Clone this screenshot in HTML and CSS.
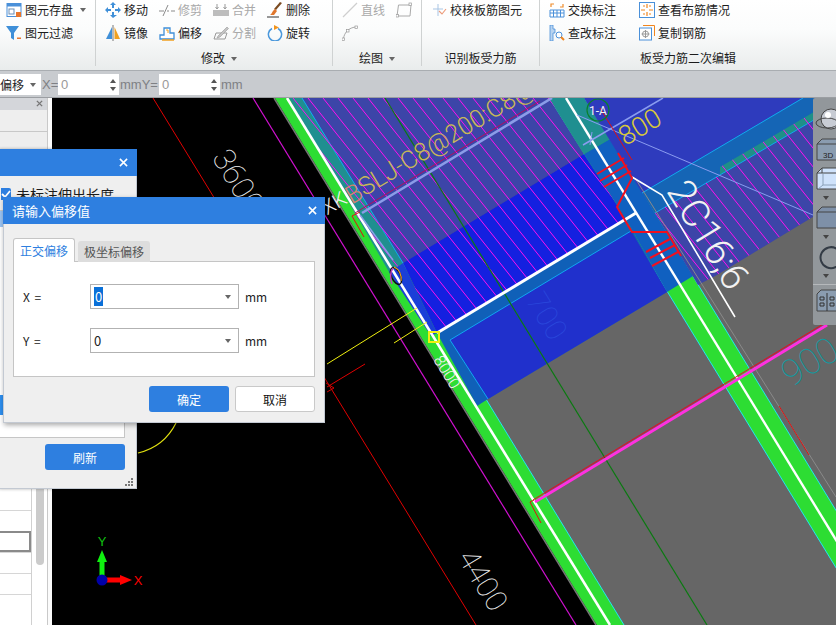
FILE: index.html
```html
<!DOCTYPE html>
<html lang="zh">
<head>
<meta charset="utf-8">
<title>板受力筋</title>
<link rel="stylesheet" href="styles.css">
</head>
<body>
<div class="app">
  <header class="ribbon">
    <section class="group g1">
      <div class="tools cols1">
        <div class="tool">
          <svg class="ic" viewBox="0 0 16 16"><rect x="1" y="1.5" width="14" height="13" fill="#fff" stroke="#4a90d9"/><rect x="1" y="1.5" width="14" height="3" fill="#4a90d9"/><rect x="3" y="7" width="5" height="5" fill="none" stroke="#6a8fb8"/><rect x="10" y="10" width="5" height="5" fill="#e8762c"/></svg>
          <span>图元存盘</span><i class="caret"></i>
        </div>
        <div class="tool">
          <svg class="ic" viewBox="0 0 16 16"><path d="M0 1h13L8 8v7L5 13V8z" fill="#3f8fd8"/><rect x="11" y="12.5" width="4" height="1.5" fill="#e8762c"/></svg>
          <span>图元过滤</span>
        </div>
      </div>
    </section>
    <section class="group g2">
      <div class="tools cols4">
        <div class="tool">
          <svg class="ic" viewBox="0 0 16 16"><path d="M8 0l3 3H9v3H7V3H5zM8 16l-3-3h2v-3h2v3h3zM0 8l3-3v2h3v2H3v2zM16 8l-3 3V9h-3V7h3V5z" fill="#3f8fd8"/></svg>
          <span>移动</span>
        </div>
        <div class="tool off">
          <svg class="ic" viewBox="0 0 16 16"><path d="M0 9h5M8 9h2M12 9h4M4 14L9 3" stroke="#8a8a8a" fill="none"/></svg>
          <span>修剪</span>
        </div>
        <div class="tool off">
          <svg class="ic" viewBox="0 0 16 16"><rect x="0" y="8" width="16" height="6" fill="#bdbdbd"/><path d="M4 2v5M2.500 5L4 7l1.500-2M12 2v5M10.500 5L12 7l1.500-2" stroke="#9a9a9a" fill="none"/></svg>
          <span>合并</span>
        </div>
        <div class="tool">
          <svg class="ic" viewBox="0 0 16 16"><path d="M15 1l-6 7-2-1 6-7z" fill="#7a4a20"/><path d="M8 7l2 2-3 4H3c2-1 2-4 5-6z" fill="#e0762c"/><rect x="0" y="14.500" width="12" height="1" fill="#333"/></svg>
          <span>删除</span>
        </div>
        <div class="tool">
          <svg class="ic" viewBox="0 0 16 16"><path d="M7 2v12H1z" fill="#3f8fd8"/><path d="M9.500 2v12H15z" fill="#f0a020"/><path d="M8 0v16" stroke="#777"/></svg>
          <span>镜像</span>
        </div>
        <div class="tool">
          <svg class="ic" viewBox="0 0 16 16"><path d="M1 14v-4h4V3h6v5h4v6z" fill="#fff" stroke="#3f8fd8" stroke-width="1.300"/><path d="M3 15h12" stroke="#f0a020" stroke-width="1.500"/><path d="M7 5h2v3" stroke="#f0a020" fill="none"/></svg>
          <span>偏移</span>
        </div>
        <div class="tool off">
          <svg class="ic" viewBox="0 0 16 16"><path d="M3 8h11l-2 6H1z" fill="none" stroke="#999"/><path d="M5 11L14 2l1.500 1.500L7 12l-3 1z" fill="#c4c4c4" stroke="#999" stroke-width=".6"/></svg>
          <span>分割</span>
        </div>
        <div class="tool">
          <svg class="ic" viewBox="0 0 16 16"><path d="M5 3.500a6.600 6.600 0 1 0 6 0" fill="none" stroke="#4a98dc" stroke-width="1.500"/><path d="M7 0l5 2.500-5 2.500z" fill="#f0941e"/></svg>
          <span>旋转</span>
        </div>
      </div>
      <div class="group-label">修改<i class="caret"></i></div>
    </section>
    <section class="group g3">
      <div class="tools cols2">
        <div class="tool off">
          <svg class="ic" viewBox="0 0 16 16"><path d="M1 15L15 1" stroke="#cfcfcf" stroke-width="1.300"/></svg>
          <span>直线</span>
        </div>
        <div class="tool off">
          <svg class="ic" viewBox="0 0 16 16"><path d="M1 14L2.500 3H15l-1 11z" fill="none" stroke="#aaa"/><rect x="0" y="12.500" width="2.500" height="2.500" fill="#fff" stroke="#999" stroke-width=".7"/><rect x="13" y="1" width="2.500" height="2.500" fill="#fff" stroke="#999" stroke-width=".7"/></svg>
        </div>
        <div class="tool off">
          <svg class="ic" viewBox="0 0 16 16"><path d="M1.500 14C2 7 8 2 14.500 2" fill="none" stroke="#aaa"/><rect x="0" y="13" width="2.500" height="2.500" fill="#fff" stroke="#999" stroke-width=".7"/><rect x="13" y="1" width="2.500" height="2.500" fill="#fff" stroke="#999" stroke-width=".7"/><rect x="4.500" y="4.500" width="2.500" height="2.500" fill="#fff" stroke="#999" stroke-width=".7"/></svg>
        </div>
      </div>
      <div class="group-label">绘图<i class="caret"></i></div>
    </section>
    <section class="group g4">
      <div class="tools cols1">
        <div class="tool tight">
          <svg class="ic" viewBox="0 0 16 16"><path d="M5 2v12M0 7h10" stroke="#a9c5e4" fill="none"/><path d="M6 9l3 3 4-5" stroke="#ec9a78" fill="none" stroke-width="1.100"/></svg>
          <span>校核板筋图元</span>
        </div>
      </div>
      <div class="group-label">识别板受力筋</div>
    </section>
    <section class="group g5">
      <div class="tools cols2w">
        <div class="tool">
          <svg class="ic" viewBox="0 0 16 16"><path d="M1 8h14v7H1zM1 11h14M4.500 8v7M8 8v7M11.500 8v7" fill="#fff" stroke="#4a90d9"/><path d="M2 5V2h3M11 5h3V2" stroke="#ee8c2c" fill="none" stroke-width="1.200"/></svg>
          <span>交换标注</span>
        </div>
        <div class="tool">
          <svg class="ic" viewBox="0 0 16 16"><rect x=".5" y=".5" width="15" height="15" fill="#fff" stroke="#4a90d9"/><path d="M8 2v4M8 10v4M2 8h4M10 8h4M4 4h2M10 4h2M4 12h2M10 12h2" stroke="#f0851e" stroke-width="1.200"/></svg>
          <span>查看布筋情况</span>
        </div>
        <div class="tool">
          <svg class="ic" viewBox="0 0 16 16"><path d="M1 0h3v4h2v4H4v8H1z" fill="#b9d4f0" stroke="#4a90d9" stroke-width=".8"/><circle cx="10" cy="10" r="3" fill="#fff" stroke="#4a90d9"/><path d="M12 12l3 3" stroke="#f0851e" stroke-width="2"/></svg>
          <span>查改标注</span>
        </div>
        <div class="tool">
          <svg class="ic" viewBox="0 0 16 16"><path d="M4 .5h11.500V11" fill="none" stroke="#f0851e"/><rect x=".5" y="3" width="12" height="12" fill="#fff" stroke="#4a90d9"/><circle cx="6.500" cy="9" r="3" fill="none" stroke="#999"/><path d="M6.500 5v8M2.500 9h8" stroke="#999"/></svg>
          <span>复制钢筋</span>
        </div>
      </div>
      <div class="group-label">板受力筋二次编辑</div>
    </section>
  </header>

  <div class="optbar">
    <div class="mode">偏移<i class="caret"></i></div>
    <span class="opt-label">X=</span>
    <div class="spin"><span>0</span><div class="spin-btns"><i class="up"></i><i class="down"></i></div></div>
    <span class="opt-label">mmY=</span>
    <div class="spin"><span>0</span><div class="spin-btns"><i class="up"></i><i class="down"></i></div></div>
    <span class="opt-label last">mm</span>
  </div>

  <main class="workspace">
    <aside class="side">
      <div class="side-head">
        <svg class="side-x" viewBox="0 0 8 8"><path d="M1 1l6 6M7 1L1 7" stroke="#777" stroke-width="1.600"/></svg>
      </div>
      <div class="side-row"></div>
      <div class="side-fill"></div>
      <div class="side-list">
        <div class="rows">
          <div class="row"></div>
          <div class="row sel"></div>
          <div class="row"></div>
          <div class="row"></div>
          <div class="row"></div>
        </div>
        <div class="scroll"><div class="thumb"></div></div>
      </div>
    </aside>

    <div class="canvas">
      <svg class="cad" viewBox="52 98 784 527" width="784" height="527">
        <defs>
          <clipPath id="hatch-area">
            <polygon points="302,98 549,98 584,154 403,263"/>
            <polygon points="289,98 302,98 403,263 389,272"/>
            <polygon points="403,263 584,154 626,219 437,333"/>
            <polygon points="655,213 720,175 720,167 836,99 836,203 717,275 698,285"/>
          </clipPath>
        </defs>
        <rect x="52" y="98" width="784" height="527" fill="#000"/>
        <polygon points="275,98 836,98 836,625 597,625" fill="#666"/>
        <line x1="274" y1="98" x2="596" y2="625" stroke="#777" stroke-width="1.500"/>
        <polygon points="275,98 302,98 624,625 597,625" fill="#2ddd33"/>
        <polygon points="549,98 584,98 906,625 871,625" fill="#2ddd33"/>
        <g stroke="#20e8f0" stroke-width="1">
          <line x1="302" y1="98" x2="624" y2="625"/>
          <line x1="549" y1="98" x2="871" y2="625"/>
          <line x1="584" y1="98" x2="906" y2="625"/>
        </g>

        <polygon points="302,98 549,98 584,154 403,263" fill="#3c45a8"/>
        <polygon points="289,98 302,98 403,263 389,272" fill="#1f8f90"/>
        <polygon points="389,272 403,263 437,333 431,336" fill="#1a3fd8"/>
        <polygon points="403,263 584,154 626,219 437,333" fill="#1420e0"/>
        <polygon points="437,333 626,219 667,292 488,399 477,406" fill="#1060b8"/>
        <polygon points="450,340 631,231 667,292 488,399" fill="#2030cc"/>
        <polygon points="549,98 584,98 610,139 584,154" fill="#1f8f90"/>
        <polygon points="584,154 610,139 693,276 667,292 626,219" fill="#1060c0"/>
        <polygon points="584,98 803,98 642,193" fill="#2e3bbd"/>
        <polygon points="655,213 836,107 836,203 717,275 698,285" fill="#3c45a8"/>
        <polygon points="642,193 836,78 836,107 655,213" fill="#1565b5"/>
        <polygon points="720,167 836,99 836,107 720,175" fill="#1f8f88"/>
        <g stroke="#10a8f0" stroke-width="1">
          <line x1="642" y1="193" x2="803" y2="98"/>
          <line x1="655" y1="213" x2="836" y2="107"/>
          <line x1="450" y1="340" x2="631" y2="231"/>
          <line x1="450" y1="340" x2="488" y2="399"/>
          <line x1="302" y1="98" x2="403" y2="263"/>
        </g>
        <path class="hatch" clip-path="url(#hatch-area)" d="M98 98l300 375M113 98l300 375M128 98l300 375M143 98l300 375M158 98l300 375M173 98l300 375M188 98l300 375M203 98l300 375M218 98l300 375M233 98l300 375M248 98l300 375M263 98l300 375M278 98l300 375M293 98l300 375M308 98l300 375M323 98l300 375M338 98l300 375M353 98l300 375M368 98l300 375M383 98l300 375M398 98l300 375M413 98l300 375M428 98l300 375M443 98l300 375M458 98l300 375M473 98l300 375M488 98l300 375M503 98l300 375M518 98l300 375M533 98l300 375M548 98l300 375M563 98l300 375M578 98l300 375M593 98l300 375M608 98l300 375M623 98l300 375M638 98l300 375M653 98l300 375M668 98l300 375M683 98l300 375M698 98l300 375M713 98l300 375M728 98l300 375M743 98l300 375M758 98l300 375M773 98l300 375M788 98l300 375M803 98l300 375M818 98l300 375M833 98l300 375"/>

        <g fill="none">
          <line x1="153" y1="98" x2="476" y2="625" stroke="#e00000"/>
          <line x1="253" y1="98" x2="576" y2="625" stroke="#d010d0" stroke-width="1.200"/>
          <line x1="385" y1="98" x2="707" y2="625" stroke="#0a7a10" stroke-width="1.200"/>
          <line x1="287" y1="98" x2="610" y2="625" stroke="#fff" stroke-width="2.600"/>
          <line x1="566" y1="98" x2="888" y2="625" stroke="#fff" stroke-width="2.400"/>
          <line x1="437" y1="333" x2="636" y2="213" stroke="#fff" stroke-width="3"/>
          <line x1="635" y1="178" x2="836" y2="497" stroke="#8a8a8a"/>
          <polyline points="632,177 662,195 735,317" stroke="#fff" stroke-width="1.600"/>

          <line x1="362" y1="213" x2="552" y2="98" stroke="#8a9ce8" stroke-width="2.600"/>
          <line x1="355" y1="213" x2="540" y2="101" stroke="#b01060" stroke-width="1"/>
          <line x1="360" y1="215" x2="393" y2="260" stroke="#8a9ce8" stroke-width="1.500"/>
          <polyline points="360,212 352,216 364,237" stroke="#e01010" stroke-width="1"/>
          <line x1="577" y1="115" x2="813" y2="215" stroke="#8a9cf0"/>
          <line x1="583" y1="145" x2="663" y2="98" stroke="#8a9cf0" stroke-width="1.500"/>
          <line x1="592" y1="132" x2="590" y2="145" stroke="#8a9cf0"/>
          <line x1="600" y1="108" x2="632" y2="160" stroke="#e01010"/>

          <polyline points="618,153 632,178 617,207 632,232 667,232 681,256" stroke="#f01020" stroke-width="2"/>
          <path d="M597 174l27-16M600 181l27-16M604 187l27-16M646 252l24-13M650 258l25-13M652 266l26-14" stroke="#f01020" stroke-width="2"/>

          <line x1="327" y1="364" x2="417" y2="308" stroke="#f0f010"/>
          <line x1="394" y1="343" x2="427" y2="322" stroke="#f0f010"/>
          <rect x="429" y="332" width="10" height="10" stroke="#f0f010" stroke-width="2"/>
          <path d="M138 453C155 449 168 439 176 423" stroke="#e0e010" stroke-width="1.200"/>
          <line x1="327" y1="387" x2="365" y2="364" stroke="#e00000"/>
          <path d="M326 383l8 5-7 4" stroke="#e00000"/>

          <ellipse cx="396" cy="276" rx="4.500" ry="9" transform="rotate(-25 396 276)" stroke="#111" stroke-width="1.500"/>
          <path d="M392 284c-2-5-2-12 1-16" stroke="#c040c0" stroke-width="1.500"/>
          <path d="M394 267c5 2 8 8 7 14" stroke="#f0a020" stroke-width="1.200"/>

          <line x1="535" y1="502" x2="827" y2="325" stroke="#ff30e0" stroke-width="3"/>
          <line x1="533" y1="500" x2="825" y2="323" stroke="#f00020" stroke-width="1"/>
          <polyline points="534,500 530,502 541,523" stroke="#e01010"/>
          <line x1="779" y1="406" x2="809" y2="455" stroke="#e01010"/>

          <circle cx="598" cy="110" r="11" stroke="#0a8030" stroke-width="1.200"/>
        </g>

        <text class="cad-t t3600" transform="rotate(58.500 238 181)" x="238" y="181">3600</text>
        <text class="cad-t t4400" transform="rotate(58.500 483 580)" x="483" y="580">4400</text>
        <text class="cad-t t8000" transform="rotate(58.500 447 372)" x="447" y="372">8000</text>
        <text class="cad-t t700" transform="rotate(58.500 547 316)" x="547" y="316">700</text>
        <text class="cad-t t900" transform="rotate(-31 810 362)" x="810" y="362">900</text>
        <text class="cad-t t800" transform="rotate(-31 640 127)" x="640" y="127">800</text>
        <text class="cad-t t2c" transform="rotate(58.500 708 235)" x="708" y="235">2C16;6</text>
        <text class="cad-t tla" x="598" y="111">1-A</text>
        <text class="cad-t tk" transform="rotate(-31 334 203)" x="334" y="203">XK</text>
        <text class="cad-s" transform="rotate(-31 347 197)" x="347" y="197"><tspan class="pink">B</tspan>SLJ-C8@200:C8@200</text>

        <g class="axis">
          <rect x="99.500" y="558" width="5" height="22" fill="#10f010"/>
          <polygon points="102,550 97,562 107,562" fill="#10f010"/>
          <rect x="102" y="577.500" width="20" height="5" fill="#ff0000"/>
          <polygon points="132,580 120,575 120,585" fill="#ff0000"/>
          <circle cx="102" cy="580" r="5.500" fill="#0000a8"/>
          <text class="ax-y" x="102" y="546">Y</text>
          <text class="ax-x" x="138" y="585">X</text>
        </g>
      </svg>

      <nav class="viewbar">
        <svg class="vb-ic sphere" viewBox="0 0 24 24"><circle cx="15" cy="11" r="10" fill="#c8ccd4" stroke="#444" stroke-width="1"/><ellipse cx="11" cy="15" rx="11" ry="5" fill="none" stroke="#444"/><circle cx="12" cy="7" r="3" fill="#fff"/></svg>
        <svg class="vb-ic" viewBox="0 0 24 23"><path d="M0 6l5-5h19v21H0z" fill="#8a9cb0" stroke="#444"/><path d="M0 6h24" stroke="#444"/><text class="vb-t" x="6" y="20">3D</text></svg>
        <svg class="vb-ic" viewBox="0 0 24 23"><path d="M0 6l5-5h19v21H0z" fill="#cfe2fb" stroke="#444"/><path d="M0 6h24M5 1v5" stroke="#444"/><path d="M6 7v11h18M6 18l-5 4" fill="none" stroke="#8aa0b8"/></svg>
        <i class="vb-caret"></i>
        <svg class="vb-ic" viewBox="0 0 24 23"><path d="M0 6l5-5h19v21H0z" fill="#7e90a8" stroke="#444"/><path d="M0 6h24" stroke="#444"/></svg>
        <i class="vb-caret"></i>
        <svg class="vb-ic" viewBox="0 0 24 23"><path d="M20 4a10.500 10.500 0 1 0 4 12" fill="none" stroke="#333b45" stroke-width="2"/></svg>
        <i class="vb-caret"></i>
        <div class="vb-sep"></div>
        <svg class="vb-ic" viewBox="0 0 24 23"><path d="M0 5l4-4h20v21H0z" fill="#8a9cb0" stroke="#444"/><path d="M3 8h4v3H3zM3 14h4v3H3zM13 8h4v3h-4zM13 14h4v3h-4zM10 4v18" fill="none" stroke="#333"/></svg>
      </nav>
    </div>
  </main>

  <section class="win win-back">
    <div class="win-title">
      <svg class="win-x" viewBox="0 0 10 10"><path d="M1 1l8 8M9 1L1 9" stroke="#fff" stroke-width="1.700"/></svg>
    </div>
    <div class="win-body">
      <label class="check"><span class="box"><svg viewBox="0 0 10 10"><path d="M1 5l3 3 5-6" stroke="#fff" stroke-width="1.800" fill="none"/></svg></span>未标注伸出长度</label>
      <div class="listbox">
        <div class="li-top"></div>
        <div class="li-fill"></div>
        <div class="li-sel"></div>
      </div>
      <div class="win-foot">
        <button class="btn primary">刷新</button>
      </div>
      <div class="grip"><i class="g-a"></i><i class="g-b"></i><i class="g-c"></i></div>
    </div>
  </section>

  <section class="win win-front">
    <div class="win-title">
      <span>请输入偏移值</span>
      <svg class="win-x" viewBox="0 0 10 10"><path d="M1 1l8 8M9 1L1 9" stroke="#fff" stroke-width="1.700"/></svg>
    </div>
    <div class="front-body">
      <div class="tabs">
        <div class="tab active">正交偏移</div>
        <div class="tab">极坐标偏移</div>
      </div>
      <div class="tab-panel">
        <div class="field">
          <span class="f-label">X =</span>
          <div class="combo"><span class="selected">0</span><i class="caret"></i></div>
          <span class="f-unit">mm</span>
        </div>
        <div class="field">
          <span class="f-label">Y =</span>
          <div class="combo"><span>0</span><i class="caret"></i></div>
          <span class="f-unit">mm</span>
        </div>
      </div>
      <div class="actions">
        <button class="btn primary">确定</button>
        <button class="btn plain">取消</button>
      </div>
    </div>
  </section>
</div>
</body>
</html>
```

FILE: styles.css
```css
* { box-sizing: border-box; }
html, body { margin: 0; padding: 0; }
body {
  width: 836px;
  height: 625px;
  overflow: hidden;
  background: #000;
  font-family: "Noto Sans CJK SC", "Liberation Sans", sans-serif;
  font-size: 12px;
  color: #1c1c1c;
}
.app { position: relative; width: 836px; height: 625px; display: flex; flex-direction: column; overflow: hidden; }

/* ribbon */
.ribbon {
  height: 71px;
  flex: none;
  display: flex;
  background: linear-gradient(#ffffff 0, #fbfcfc 30px, #e9ecec 70px);
  border-bottom: 1px solid #a9adb1;
}
.group {
  position: relative;
  flex: none;
  height: 66px;
  border-right: 1px solid #cfd2d2;
}
.g1 { width: 96px; padding-left: 6px; }
.g2 { width: 237px; padding-left: 9px; }
.g3 { width: 89px; padding-left: 9px; }
.g4 { width: 118px; padding-left: 11px; }
.g5 { flex: 1; border-right: 0; padding-left: 9px; }
.tools { display: grid; grid-auto-rows: 23px; height: 46px; margin-top: -1px; }
.cols1 { grid-template-columns: 1fr; }
.cols4 { grid-template-columns: repeat(4, 54px); }
.cols2 { grid-template-columns: repeat(2, 54px); }
.cols2w { grid-template-columns: 90px 110px; }
.tool { display: flex; align-items: center; gap: 3px; white-space: nowrap; height: 21px; }
.tool.tight { gap: 1px; }
.tool.off { color: #a9a9a9; }
.ic { width: 16px; height: 16px; flex: none; }
.caret {
  display: inline-block;
  width: 0;
  height: 0;
  border-left: 3.500px solid transparent;
  border-right: 3.500px solid transparent;
  border-top: 4px solid #666;
}
.g1 .caret { margin-left: 4px; }
.group-label {
  position: absolute;
  left: 0;
  right: 0;
  top: 49px;
  height: 18px;
  line-height: 18px;
  text-align: center;
  white-space: nowrap;
}
.group-label .caret { margin-left: 6px; vertical-align: 2px; }
.g2 .group-label { padding-left: 10px; }
.g5 .group-label { padding-left: 100px; text-align: left; }

/* option bar */
.optbar {
  flex: none;
  height: 27px;
  display: flex;
  align-items: center;
  background: #c8cbcf;
  border-bottom: 1px solid #9b9ea2;
  color: #7e8084;
  font-size: 12px;
}
.mode {
  width: 41px;
  height: 21px;
  margin-top: 1px;
  background: #fff;
  color: #222;
  display: flex;
  align-items: center;
  justify-content: space-between;
  padding-right: 5px;
  overflow: hidden;
}
.opt-label { padding: 0 1px; font-family: "Liberation Sans", sans-serif; font-size: 13px; white-space: nowrap; }
.opt-label:first-of-type { width: 17px; }
.opt-label.last { padding-left: 1px; }
.spin {
  width: 61px;
  height: 21px;
  margin-top: 1px;
  background: #fff;
  padding-left: 3px;
  color: #999;
  display: flex;
  align-items: center;
  justify-content: space-between;
  font-family: "Liberation Sans", sans-serif;
  font-size: 13px;
}
.spin-btns { width: 12px; display: flex; flex-direction: column; align-items: center; gap: 4px; }
.spin-btns i { width: 0; height: 0; border-left: 3px solid transparent; border-right: 3px solid transparent; }
.spin-btns .up { border-bottom: 4px solid #555; }
.spin-btns .down { border-top: 4px solid #555; }

/* workspace */
.workspace { flex: 1; display: flex; min-height: 0; }
.side {
  flex: none;
  width: 52px;
  display: flex;
  flex-direction: column;
  background: #eee;
  border-right: 4px solid #fbfbfb;
  box-shadow: inset -1px 0 0 #c9c9c9;
}
.side-head { height: 12px; background: #d4d6da; position: relative; border-right: 1px solid #c9c9c9; }
.side-x { position: absolute; left: 36px; top: 2px; width: 7px; height: 7px; }
.side-row { height: 22px; border-bottom: 1px solid #c8c8c8; }
.side-fill { flex: 1; }
.side-list { height: 137px; display: flex; background: #fff; border-right: 1px solid #c9c9c9; }
.rows { width: 32px; border-right: 1px solid #d0d0d0; padding-top: 22px; }
.row { height: 21px; border-top: 1px solid #d6d6d6; }
.row.sel { border: 2px solid #8a8a8a; border-left: 0; }
.scroll { flex: 1; position: relative; }
.thumb { width: 8px; height: 77px; margin-left: 4px; background: #cbcbcb; border-radius: 0 0 4px 4px; }

.canvas { flex: 1; position: relative; overflow: hidden; background: #000; }
.cad { display: block; }
.hatch { fill: none; stroke: #ff10f0; stroke-width: 1; }
.cad-t { font-family: Roboto, "Liberation Sans", sans-serif; font-weight: 100; fill: #f2f2f2; text-anchor: middle; dominant-baseline: central; }
.t3600 { font-size: 31px; }
.t4400 { font-size: 30px; }
.t8000 { font-size: 16px; font-weight: 300; }
.t700 { font-size: 30px; fill: #2a48dc; }
.t900 { font-size: 36px; fill: #109aa0; }
.t800 { font-size: 27px; fill: #d8c83a; font-weight: 300; }
.t2c { font-size: 39px; font-weight: 300; }
.tla { font-size: 12px; font-weight: 400; }
.tk { font-size: 20px; font-weight: 300; }
.cad-s { font-family: Roboto, "Liberation Sans", sans-serif; font-weight: 300; font-size: 25px; fill: #c8b858; dominant-baseline: central; }
.pink { fill: #d88070; }
.ax-y, .ax-x { font-family: "Liberation Sans", sans-serif; font-size: 13px; text-anchor: middle; }
.ax-y { fill: #10c010; }
.ax-x { fill: #ff0000; }

.viewbar {
  position: absolute;
  right: 0;
  top: 0;
  width: 23px;
  height: 227px;
  padding: 10px 0 0 4px;
  background: #92979b;
  border-radius: 2px 0 0 2px;
  display: flex;
  flex-direction: column;
  overflow: hidden;
}
.vb-ic { width: 24px; height: 23px; flex: none; overflow: visible; margin-bottom: 6px; }
.sphere { height: 24px; margin-bottom: 6px; margin-left: -1px; }
.vb-t { font-family: "Liberation Sans", sans-serif; font-size: 8px; fill: #222; }
.vb-caret { flex: none; align-self: center; width: 0; height: 0; margin: 0 0 6px -2px; border-left: 3px solid transparent; border-right: 3px solid transparent; border-top: 4px solid #444; }
.vb-sep { flex: none; height: 1px; background: #b5b8bb; margin: 0 0 4px -4px; }

/* windows */
.win { position: absolute; background: #efefef; border: 1px solid #c3c9d2; display: flex; flex-direction: column; }
.win-title {
  flex: none;
  height: 27px;
  background: #2e7fe0;
  color: #fff;
  font-size: 13px;
  display: flex;
  align-items: center;
  justify-content: space-between;
  padding: 0 8px;
  margin: -1px -1px 0;
}
.win-x { width: 9px; height: 9px; margin-left: auto; }
.win-back {
  left: -1px;
  top: 149px;
  width: 138px;
  height: 340px;
  box-shadow: 0 0 3px rgba(0,0,0,.3);
}
.win-back .win-title { padding-right: 9px; }
.win-body { flex: 1; position: relative; display: flex; flex-direction: column; padding-top: 9px; }
.check { display: flex; align-items: center; gap: 5px; height: 18px; padding-left: 1px; white-space: nowrap; overflow: hidden; font-size: 14px; }
.box { width: 10px; height: 12px; flex: none; background: #2e7fe0; border-radius: 0 2px 2px 0; }
.box svg { display: block; width: 10px; height: 12px; }
.listbox { width: 125px; height: 228px; margin-top: 7px; background: #fff; border: 1px solid #c6c6c6; border-left: 0; display: flex; flex-direction: column; }
.li-top { height: 16px; background: #9cc4f2; }
.li-fill { flex: 1; }
.li-sel { height: 20px; background: #2e8ff0; margin-bottom: 22px; }
.win-foot { display: flex; padding: 6px 11px 0 0; justify-content: flex-end; }
.btn {
  width: 80px;
  height: 26px;
  padding: 0;
  border-radius: 3px;
  font-family: inherit;
  font-size: 12px;
}
.primary { background: #2e7fe0; border: 0; color: #fff; }
.plain { background: #fff; border: 1px solid #c9c9c9; color: #111; }
.grip { position: absolute; right: 3px; bottom: 2px; display: flex; flex-direction: column; align-items: flex-end; gap: 1px; }
.grip i { display: block; height: 2px; background: repeating-linear-gradient(90deg, #777 0 2px, transparent 2px 3px); }
.g-a { width: 2px; }
.g-b { width: 5px; }
.g-c { width: 8px; }

.win-front {
  left: 3px;
  top: 197px;
  width: 322px;
  height: 226px;
  box-shadow: 1px 2px 5px rgba(0,0,0,.35);
}
.win-front .win-title { padding-left: 9px; }
.front-body { flex: 1; display: flex; flex-direction: column; padding: 14px 9px 0 9px; }
.tabs { display: flex; align-items: flex-end; gap: 3px; height: 24px; position: relative; z-index: 1; margin-bottom: -1px; }
.tab { width: 72px; height: 21px; line-height: 21px; text-align: center; background: #ddd; color: #555; border-radius: 3px 3px 0 0; }
.tab.active { width: 62px; height: 24px; line-height: 23px; background: #fff; color: #2e7fe0; border: 1px solid #c5c5c5; border-bottom: 0; }
.tab-panel { height: 116px; background: #fff; border: 1px solid #c5c5c5; padding: 22px 0 0 9px; display: flex; flex-direction: column; gap: 19px; }
.field { display: flex; align-items: center; height: 25px; }
.f-label { width: 67px; color: #222; word-spacing: 2px; }
.f-unit { margin-left: 6px; color: #222; font-size: 12px; }
.combo { width: 149px; height: 25px; background: #fff; border: 1px solid #b2b2b2; display: flex; align-items: center; justify-content: space-between; padding: 0 7px 0 3px; color: #222; font-size: 13px; }
.selected { background: #0a70d8; color: #fff; padding: 0 1px; }
.actions { display: flex; justify-content: flex-end; gap: 6px; margin-top: 9px; }
```
